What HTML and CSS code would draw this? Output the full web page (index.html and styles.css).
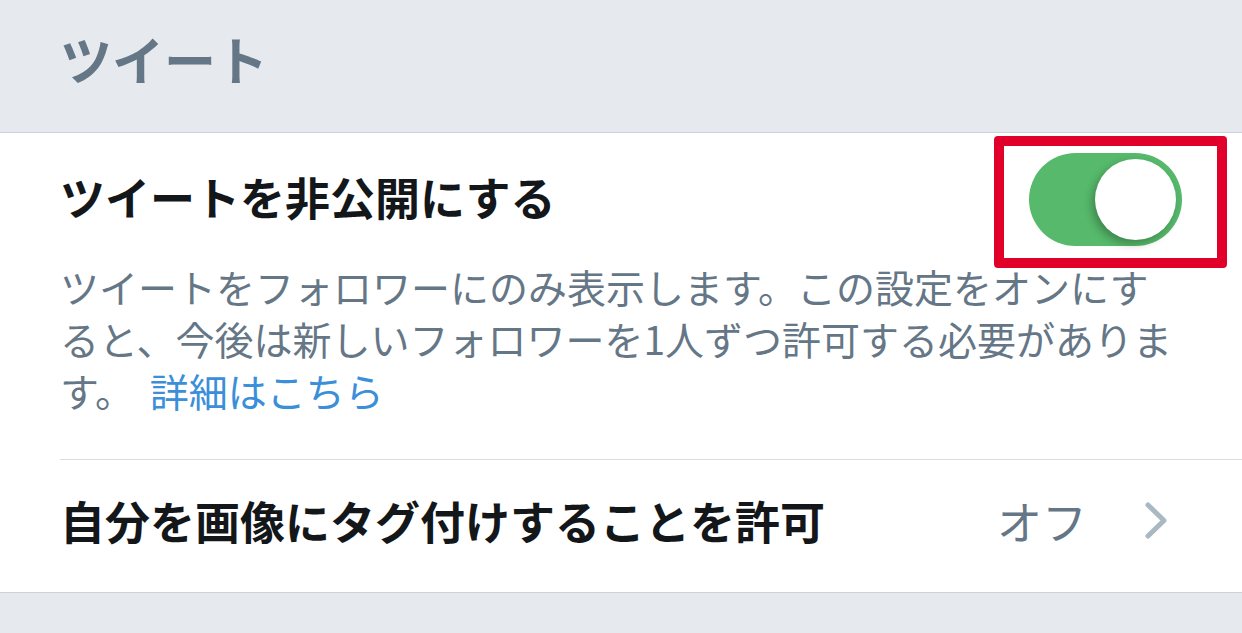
FILE: index.html
```html
<!DOCTYPE html>
<html lang="ja">
<head>
<meta charset="utf-8">
<title>ツイート設定</title>
<link rel="stylesheet" href="styles.css">
</head>
<body>
<header class="section-header">
  <h2 class="section-title">ツイート</h2>
</header>
<ul class="settings">
  <li class="setting setting--toggle">
    <div class="setting-head">
      <span class="setting-label">ツイートを非公開にする</span>
      <div class="switch is-on" role="switch" aria-checked="true">
        <span class="switch-knob"></span>
        <span class="highlight"></span>
      </div>
    </div>
    <p class="setting-desc">ツイートをフォロワーにのみ表示します。この設定をオンにすると、今後は新しいフォロワーを1人ずつ許可する必要があります。 <a class="link" href="#">詳細はこちら</a></p>
  </li>
  <li class="setting setting--nav">
    <span class="setting-label">自分を画像にタグ付けすることを許可</span>
    <span class="setting-value">オフ</span>
    <svg class="chevron" width="22" height="37" viewBox="0 0 22 37" aria-hidden="true">
      <polyline points="3,3 19,18.5 3,34" fill="none" stroke="#aab8c2" stroke-width="5" stroke-linecap="round" stroke-linejoin="round"/>
    </svg>
  </li>
</ul>
</body>
</html>
```

FILE: styles.css
```css
html, body {
  margin: 0;
  padding: 0;
}

body {
  background: #e6e9ed;
  font-family: "Noto Sans CJK JP", "Noto Sans", sans-serif;
  color: #14171a;
}

.section-header {
  padding: 32px 60px 47px;
  border-bottom: 1px solid #cdd2d8;
}

.section-title {
  margin: 0;
  font-size: 52px;
  line-height: 53px;
  font-weight: 700;
  color: #657786;
}

.settings {
  list-style: none;
  margin: 0;
  padding: 0 0 0 60px;
  background: #ffffff;
  border-bottom: 1px solid #cdd2d8;
}

.setting {
  padding-right: 60px;
}

.setting + .setting {
  border-top: 1px solid #d9dce1;
}

.setting--toggle {
  padding-top: 20px;
  padding-bottom: 43px;
}

.setting-head {
  display: flex;
  align-items: center;
  justify-content: space-between;
}

.setting-label {
  font-size: 45px;
  font-weight: 700;
  line-height: 60px;
  color: #14171a;
  padding-bottom: 6px;
}

.switch {
  position: relative;
  width: 153px;
  height: 93px;
  border-radius: 46.5px;
  background: #56b96b;
  flex-shrink: 0;
}

.switch-knob {
  position: absolute;
  top: 6px;
  right: 6px;
  width: 81px;
  height: 81px;
  border-radius: 50%;
  background: #ffffff;
  box-shadow: -3px 4px 9px rgba(0, 0, 0, 0.28);
}

.highlight {
  position: absolute;
  top: -17px;
  left: -35px;
  width: 233px;
  height: 132px;
  box-sizing: border-box;
  border: 10px solid #e1002a;
  border-radius: 4px;
}

.setting-desc {
  margin: 14px 0 0;
  font-size: 39px;
  line-height: 52px;
  color: #657786;
}

.link {
  color: #3b8fd9;
  text-decoration: none;
  margin-left: 7px;
}

.setting--nav {
  display: flex;
  align-items: center;
  padding-top: 24px;
  padding-bottom: 35px;
}

.setting--nav .setting-label {
  flex: 1;
  line-height: 73px;
  padding-bottom: 0;
}

.setting-value {
  font-size: 45px;
  line-height: 73px;
  color: #657786;
  margin-right: 58px;
}

.chevron {
  display: block;
  margin-right: 15px;
  flex-shrink: 0;
}
```
